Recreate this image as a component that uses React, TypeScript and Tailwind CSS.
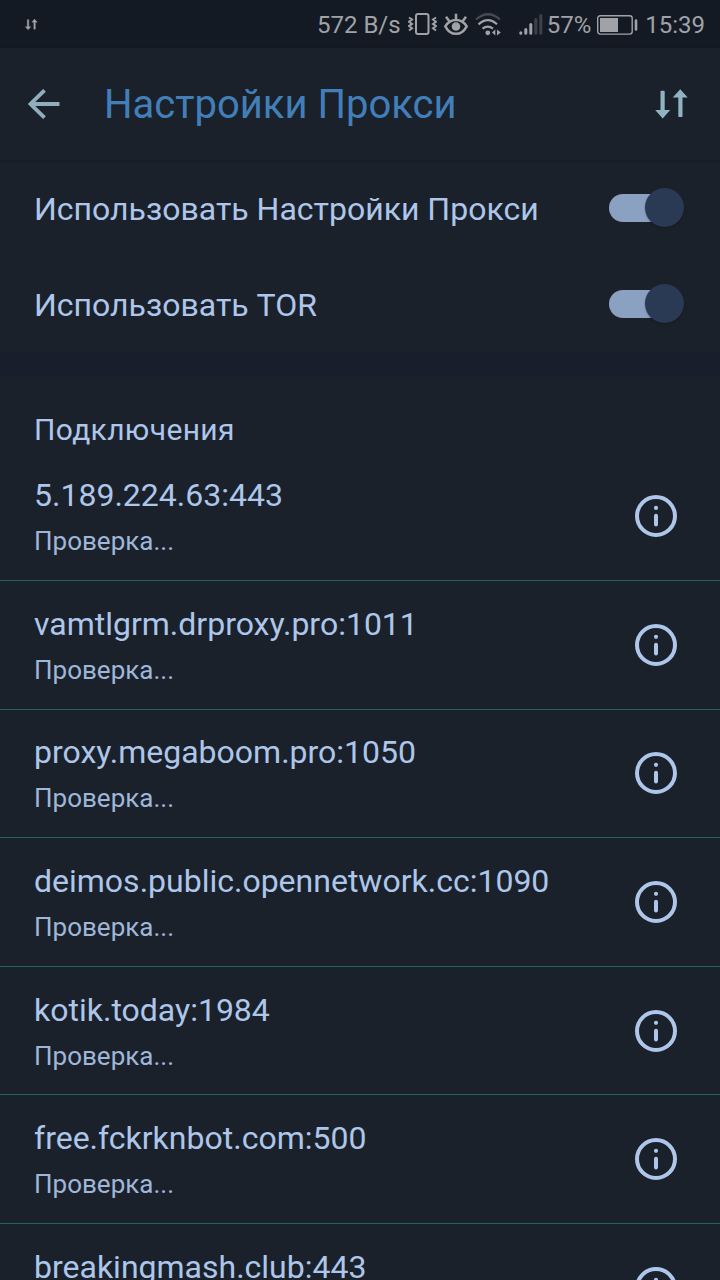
import React from "react";

const proxies = [
  "5.189.224.63:443",
  "vamtlgrm.drproxy.pro:1011",
  "proxy.megaboom.pro:1050",
  "deimos.public.opennetwork.cc:1090",
  "kotik.today:1984",
  "free.fckrknbot.com:500",
  "breakingmash.club:443",
];

function SwapIcon({ className }: { className: string }) {
  return (
    <svg className={className} viewBox="0 0 34 30" fill="currentColor">
      <path d="M5.5 2.5q0-.8.8-.8h2.600q.8 0 .8.8V21H15.200L7.700 29.600.2 21H5.500z" />
      <path d="M23.300 27.200q0 .8.8.8h2.600q.8 0 .8-.8V8.600H32.700L25.300.3 17.700 8.600h5.600z" />
    </svg>
  );
}

function StatusBar() {
  return (
    <div className="flex h-12 shrink-0 items-center bg-[#141a23] pl-[25px] pr-[15px] pt-0.5 text-[#a0a2a7]">
      <SwapIcon className="mb-px h-[11px] w-[13px] stroke-current stroke-1" />
      <span className="ml-auto whitespace-nowrap text-[24px] leading-none">572 B/s</span>
      <svg className="ml-[7px] mb-0.5 h-6 w-[29px] shrink-0" viewBox="0 0 29 24" fill="none" stroke="currentColor" strokeWidth="2">
        <rect x="8" y="2" width="12.500" height="20" rx="2" />
        <path d="M1 5.500l3 2-3 2.200 3 2.200-3 2.200 3 2.200-3 2.200M28 5.500l-3 2 3 2.200-3 2.200 3 2.200-3 2.200 3 2.200" strokeWidth="2" />
      </svg>
      <svg className="ml-[7px] mb-0.5 h-6 w-6 shrink-0" viewBox="0 0 24 24" fill="none" stroke="currentColor" strokeWidth="2.500">
        <path d="M1.300 14.300C4 10 8 8 12 8s8 2 10.700 6.300C20 19.300 16 21.800 12 21.800S4 19.300 1.300 14.300z" />
        <path d="M12 8V1.800M5.500 9.500L2 4.800M18.500 9.500l3.500-4.700" />
        <circle cx="12" cy="14.500" r="4.300" fill="currentColor" stroke="none" />
      </svg>
      <svg className="ml-[7px] mb-0.5 h-6 w-[27px] shrink-0" viewBox="0 0 27 24" fill="none" stroke="currentColor" strokeWidth="2.200">
        <path d="M1 7.500Q13 -3 25 7.500" stroke="#464b53" />
        <path d="M3.500 12.300Q13 4 22 12.300M7.500 16.700q5.300-4.200 10.500 0" />
        <circle cx="12.800" cy="20.800" r="2.400" fill="currentColor" stroke="none" />
        <path d="M17 20.500l3.300-3v6zM22 17.500v6l3.800-3z" fill="currentColor" stroke="none" />
      </svg>
      <svg className="ml-[17px] mb-0.5 h-6 w-6 shrink-0" viewBox="0 0 24 24" fill="none" stroke="currentColor" strokeWidth="3" strokeLinecap="round">
        <path d="M1.800 20.800v.4M6.800 17.500v3.700M11.800 12.500v8.700" />
        <path d="M16.800 7.500v13.700M21.800 3.500v17.700" stroke="#3d424a" />
      </svg>
      <span className="ml-1 whitespace-nowrap text-[24px] leading-none">57%</span>
      <svg className="ml-[6px] mb-px h-5 w-[41px] shrink-0" viewBox="0 0 41 20" fill="none" stroke="currentColor">
        <rect x=".7" y=".7" width="34.500" height="18.400" rx="2.500" strokeWidth="1.400" />
        <rect x="3" y="3" width="18" height="14" fill="currentColor" stroke="none" />
        <path d="M39 5.500v9" strokeWidth="2.600" strokeLinecap="round" />
      </svg>
      <span className="ml-[7px] whitespace-nowrap text-[24px] leading-none">15:39</span>
    </div>
  );
}

function Toggle() {
  return (
    <div className="mb-px flex h-10 w-[75px] items-center">
      <div className="h-7 w-[54px] shrink-0 rounded-full bg-[#8ba1c1]" />
      <div className="-ml-[18px] size-[39px] shrink-0 rounded-full bg-[#2a3a55] shadow-[0_1px_2px_rgba(0,0,0,0.3)]" />
    </div>
  );
}

function SettingRow({ label }: { label: string }) {
  return (
    <div className="flex h-24 shrink-0 items-center justify-between pl-[34px] pr-9">
      <span className="whitespace-nowrap pt-0.5 text-[32px] leading-none">{label}</span>
      <Toggle />
    </div>
  );
}

function InfoIcon() {
  return (
    <svg className="size-[42px] shrink-0" viewBox="0 0 42 42" fill="none" stroke="currentColor">
      <circle cx="21" cy="21" r="19" strokeWidth="4" />
      <circle cx="21" cy="12.800" r="2.100" fill="currentColor" stroke="none" />
      <path d="M21 20.800v8.700" strokeWidth="4" strokeLinecap="round" />
    </svg>
  );
}

export default function App() {
  return (
    <div className="flex h-[1280px] w-[720px] flex-col overflow-hidden bg-[#1a212b] font-['Roboto',sans-serif] text-[#adc6e9]">
      <StatusBar />
      <header className="flex h-28 shrink-0 items-center pl-7 pr-[31px] shadow-[0_1px_3px_rgba(0,0,0,0.2)]">
        <svg className="h-[30px] w-8 text-[#91aebd]" viewBox="0 0 32 30" fill="none" stroke="currentColor" strokeWidth="3.800">
          <path d="M31.500 15H2.500M16.500 1.300L2.500 15l14 13.700" />
        </svg>
        <h1 className="ml-[44px] whitespace-nowrap pt-0.5 text-[40px] leading-none text-[#427fb9]">Настройки Прокси</h1>
        <SwapIcon className="ml-auto h-[30px] w-[34px] text-[#91b2c1]" />
      </header>
      <SettingRow label="Использовать Настройки Прокси" />
      <SettingRow label="Использовать TOR" />
      <div className="h-6 shrink-0 bg-[#181e2c]" />
      <section className="shrink-0">
        <h2 className="flex h-[76.400px] items-center pl-[34px] pt-[32px] text-[30px] leading-none tracking-[0.35px]">Подключения</h2>
        {proxies.map((address) => (
          <div key={address} className="flex h-[128.600px] items-center justify-between border-b border-[#216063] pl-[34px] pr-[43px]">
            <div className="pt-1">
              <div className="whitespace-nowrap text-[32px] leading-[46px]">{address}</div>
              <div className="text-[26px] leading-[46px] text-[#9fb6d8]">Проверка...</div>
            </div>
            <InfoIcon />
          </div>
        ))}
      </section>
    </div>
  );
}
